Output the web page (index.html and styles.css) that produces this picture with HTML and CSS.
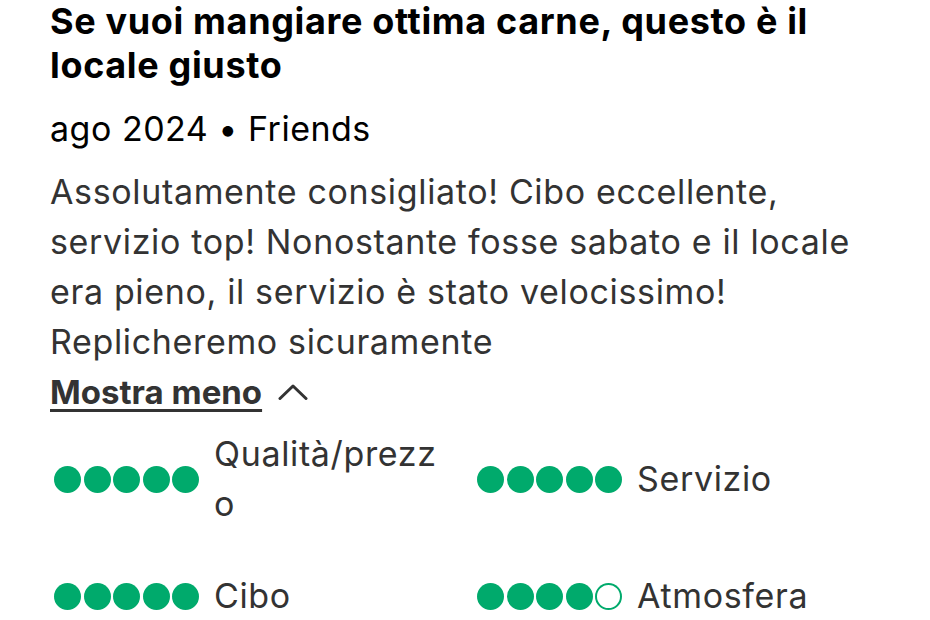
FILE: index.html
```html
<!DOCTYPE html>
<html lang="it">
<head>
<meta charset="utf-8">
<title>Recensione</title>
<link rel="stylesheet" href="styles.css">
</head>
<body>
<article class="review">
  <h2 class="review-title">Se vuoi mangiare ottima carne, questo è il locale giusto</h2>
  <div class="review-meta">ago 2024 • Friends</div>
  <p class="review-body">Assolutamente consigliato! Cibo eccellente, servizio top! Nonostante fosse sabato e il locale era pieno, il servizio è stato velocissimo! Replicheremo sicuramente</p>
  <button class="toggle" type="button">
    <span class="toggle-text">Mostra meno</span>
    <svg class="chevron" width="30" height="16" viewBox="0 0 30 16" aria-hidden="true"><path d="M2 14.5 L15 2 L28 14.5" fill="none" stroke="#333" stroke-width="3" stroke-linecap="round" stroke-linejoin="round"/></svg>
  </button>
  <div class="ratings">
    <div class="rating">
      <div class="bubbles"><span class="bubble"></span><span class="bubble"></span><span class="bubble"></span><span class="bubble"></span><span class="bubble"></span></div>
      <span class="rating-label">Qualità/prezzo</span>
    </div>
    <div class="rating">
      <div class="bubbles"><span class="bubble"></span><span class="bubble"></span><span class="bubble"></span><span class="bubble"></span><span class="bubble"></span></div>
      <span class="rating-label">Servizio</span>
    </div>
    <div class="rating">
      <div class="bubbles"><span class="bubble"></span><span class="bubble"></span><span class="bubble"></span><span class="bubble"></span><span class="bubble"></span></div>
      <span class="rating-label">Cibo</span>
    </div>
    <div class="rating">
      <div class="bubbles"><span class="bubble"></span><span class="bubble"></span><span class="bubble"></span><span class="bubble"></span><span class="bubble empty"></span></div>
      <span class="rating-label">Atmosfera</span>
    </div>
  </div>
</article>
</body>
</html>
```
FILE: styles.css
```css
html, body {
  margin: 0;
  padding: 0;
  background: #fff;
}
body {
  font-family: Inter, "Liberation Sans", sans-serif;
  color: #333;
}
.review {
  width: 820px;
  padding-left: 50px;
}
.review-title {
  margin: -1px 0 0;
  font-size: 36px;
  line-height: 44px;
  font-weight: 700;
  letter-spacing: 0.65px;
  color: #000;
}
.review-meta {
  margin-top: 20px;
  font-size: 34px;
  line-height: 44px;
  letter-spacing: 0.5px;
  color: #000;
}
.review-body {
  margin: 16px 0 0;
  font-size: 34px;
  line-height: 50px;
  letter-spacing: 0.65px;
  color: #333;
}
.toggle {
  display: flex;
  align-items: center;
  gap: 16px;
  margin: 0;
  padding: 0;
  border: 0;
  background: none;
  font-family: inherit;
  font-size: 33px;
  line-height: 50px;
  font-weight: 700;
  color: #333;
}
.toggle-text {
  text-decoration: underline;
  text-decoration-thickness: 3px;
  text-underline-offset: 5px;
}
.ratings {
  display: grid;
  grid-template-columns: 1fr 1fr;
  column-gap: 26px;
  row-gap: 42px;
  margin-top: 12px;
}
.rating {
  display: flex;
  align-items: center;
  gap: 15px;
}
.bubbles {
  display: flex;
  gap: 2.5px;
  margin-left: 4px;
  flex: none;
}
.bubble {
  width: 27px;
  height: 27px;
  border-radius: 50%;
  background: #00aa6c;
}
.bubble.empty {
  background: #fff;
  box-shadow: inset 0 0 0 2px #00aa6c;
}
.rating-label {
  font-size: 34px;
  line-height: 50px;
  letter-spacing: 0.65px;
  color: #333;
  word-break: break-all;
}
```
